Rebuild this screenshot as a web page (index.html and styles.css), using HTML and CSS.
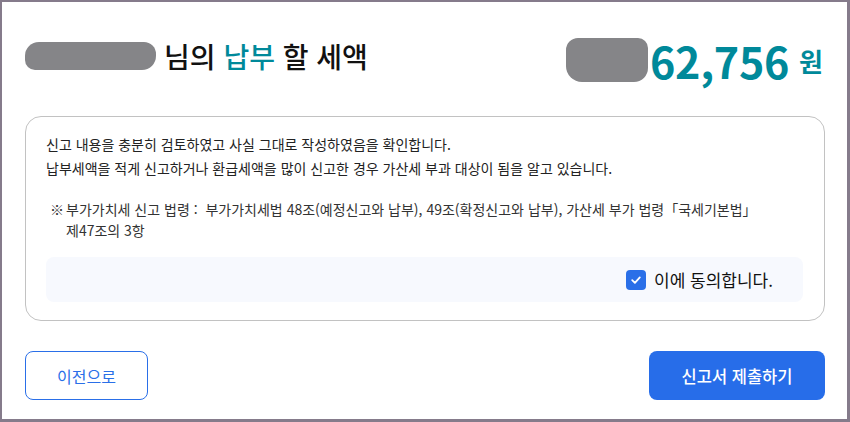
FILE: index.html
```html
<!DOCTYPE html>
<html lang="ko">
<head>
    <meta charset="UTF-8">
    <meta name="viewport" content="width=device-width, initial-scale=1.0">
    <title>신고서 제출</title>
    <link rel="stylesheet" href="styles.css">
</head>
<body>
    <div class="frame">
        <div class="dialog">
            <div class="head">
                <h1 class="title">
                    <span class="blur blur-name"></span>
                    <span>님의 <em>납부</em> 할 세액</span>
                </h1>
                <div class="amount">
                    <span class="blur blur-amount"></span>
                    <strong>62,756</strong>
                    <span class="won">원</span>
                </div>
            </div>

            <div class="confirm">
                <p class="lead">
                    신고 내용을 충분히 검토하였고 사실 그대로 작성하였음을 확인합니다.<br>
                    납부세액을 적게 신고하거나 환급세액을 많이 신고한 경우 가산세 부과 대상이 됨을 알고 있습니다.
                </p>
                <p class="note">
                    <span class="mark">※</span>
                    <span>부가가치세 신고 법령 :&nbsp; 부가가치세법 48조(예정신고와 납부), 49조(확정신고와 납부), 가산세 부가 법령「국세기본법」<br>제47조의 3항</span>
                </p>
                <label class="agree">
                    <span class="check">
                        <svg width="12" height="12" viewBox="0 0 12 12"><path d="M2.2 6.2 L4.9 8.8 L9.8 3.4" fill="none" stroke="#fff" stroke-width="1.8" stroke-linecap="round" stroke-linejoin="round"/></svg>
                    </span>
                    이에 동의합니다.
                </label>
            </div>

            <div class="actions">
                <button class="btn btn-line">이전으로</button>
                <button class="btn btn-fill">신고서 제출하기</button>
            </div>
        </div>
    </div>
</body>
</html>
```

FILE: styles.css
```css
* {
    box-sizing: border-box;
}

body {
    margin: 0;
    padding: 0;
    font-family: "Noto Sans CJK KR", "Noto Sans", sans-serif;
    color: #111;
}

.frame {
    width: 850px;
    height: 422px;
    border-style: solid;
    border-color: #857b8b;
    border-width: 2px 3px 3px 2px;
    background: #fff;
}

.dialog {
    padding: 0 22px 0 23px;
}

.head {
    display: flex;
    align-items: center;
    justify-content: space-between;
    height: 114px;
    padding-bottom: 6px;
}

.title {
    display: flex;
    align-items: center;
    margin: 0;
    font-size: 28px;
    font-weight: 500;
}

.title em {
    font-style: normal;
    color: #00899a;
}

.blur {
    display: inline-block;
    background: #858588;
}

.blur-name {
    width: 131px;
    height: 28px;
    margin-right: 8px;
    border-radius: 14px 12px 14px 10px;
}

.amount {
    display: flex;
    align-items: center;
    color: #00899a;
    padding-right: 2px;
    padding-top: 8px;
}

.blur-amount {
    width: 82px;
    height: 44px;
    border-radius: 12px 10px 14px 16px;
    margin-right: 2px;
}

.amount strong {
    font-size: 43px;
    font-weight: 700;
    line-height: 1;
    letter-spacing: -0.3px;
}

.won {
    margin-left: 10px;
    font-size: 26px;
    font-weight: 700;
}

.confirm {
    border: 1px solid #c2c2c2;
    border-radius: 16px;
    padding: 15px 21px 18px 20px;
}

.lead {
    margin: 0;
    font-size: 14px;
    line-height: 24px;
    color: #222;
}

.note {
    display: flex;
    margin: 19px 0 0 4px;
    font-size: 14px;
    line-height: 20.5px;
    color: #333;
}

.note .mark {
    flex: none;
    width: 16px;
}

.agree {
    display: flex;
    align-items: center;
    justify-content: flex-end;
    gap: 8px;
    height: 45px;
    margin-top: 17px;
    padding-right: 30px;
    border-radius: 8px;
    background: #f7f9fe;
    font-size: 17px;
}

.check {
    display: flex;
    align-items: center;
    justify-content: center;
    width: 20px;
    height: 20px;
    border-radius: 4px;
    background: #2a6fe8;
}

.actions {
    display: flex;
    justify-content: space-between;
    margin-top: 30px;
}

.btn {
    height: 49px;
    border-radius: 8px;
    font-family: inherit;
    font-size: 16px;
    cursor: pointer;
}

.btn-line {
    width: 123px;
    border: 1px solid #2a6fe8;
    background: #fff;
    color: #2a6fe8;
}

.btn-fill {
    width: 176px;
    border: none;
    background: #276de9;
    color: #fff;
    font-size: 16.5px;
    font-weight: 500;
}
```
